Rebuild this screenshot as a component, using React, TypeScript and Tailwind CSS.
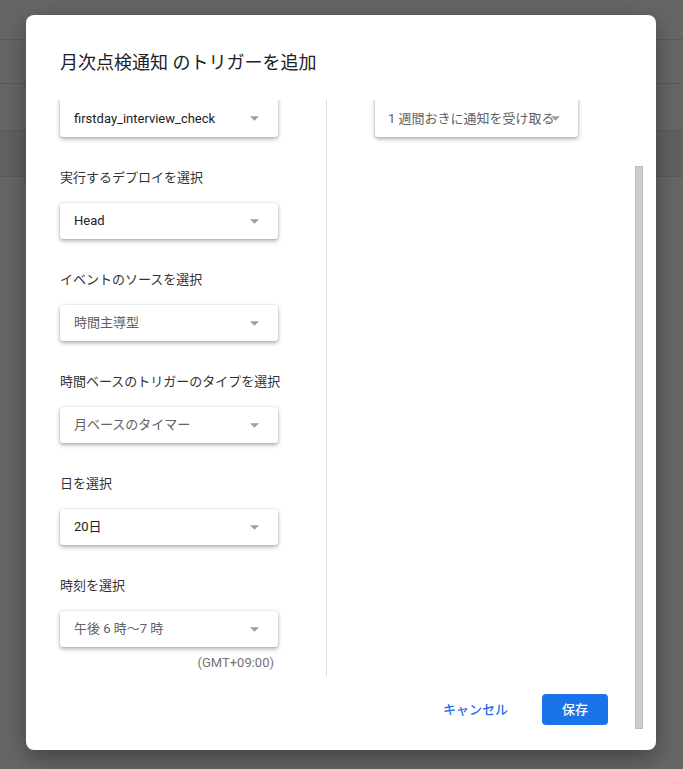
import React from "react";

const font = { fontFamily: '"Roboto", "Noto Sans CJK JP", sans-serif' };

function Arrow({ className }: { className: string }) {
  return (
    <svg viewBox="0 0 10 5" className={className}>
      <path d="M0 0 L10 0 L5 5 Z" fill="#9e9e9e" />
    </svg>
  );
}

// cut: the select is partly scrolled out of view at the top
function Select({ value, muted, wide, cut }: { value: string; muted?: boolean; wide?: boolean; cut?: boolean }) {
  return (
    <div
      className={
        "relative flex items-center rounded-[3px] bg-white shadow-[0_2px_4px_rgba(0,0,0,0.32),0_0_2px_rgba(0,0,0,0.14)] " +
        (cut ? "-mt-[4px] h-[41px] pt-[4px] " : "h-[36px] ") +
        (wide ? "w-[203px] pl-[13px]" : "w-[218px] pl-[14px]")
      }
    >
      <span className={"whitespace-nowrap text-[13px] " + (muted ? "text-[#616161]" : "text-[#212121]")}>{value}</span>
      <Arrow
        className={
          "absolute h-[5px] w-[9px] " + (cut ? "top-[20px] " : "top-[16px] ") + (wide ? "right-[18px]" : "right-[19px]")
        }
      />
    </div>
  );
}

function Field({ label, value, muted }: { label: string; value: string; muted?: boolean }) {
  return (
    <div className="mt-[31px]">
      <div className="mb-[15px] h-[20px] text-[13px] leading-[20px] text-[#333]">{label}</div>
      <Select value={value} muted={muted} />
    </div>
  );
}

export default function App() {
  return (
    <div style={font} className="relative h-[769px] w-[683px] overflow-hidden bg-[#666666]">
      {/* page behind the overlay */}
      <div className="h-[40px] border-b border-[#5a5a5a]" />
      <div className="h-[44px] border-b border-[#5a5a5a]" />
      <div className="h-[47px] border-b border-[#5a5a5a]" />
      <div className="h-[46px] border-b border-[#5a5a5a] bg-[#616161]" />

      {/* dialog */}
      <div className="absolute left-[26px] top-[15px] h-[735px] w-[630px] rounded-[8px] bg-white shadow-[0_8px_24px_rgba(0,0,0,0.35)]">
        <div className="pl-[34px] pt-[36px]">
          <h2 className="h-[24px] text-[18px] leading-[24px] text-[#202124]">月次点検通知 のトリガーを追加</h2>
        </div>

        <div className="mt-[25px] flex h-[576px] overflow-hidden">
          <div className="w-[301px] border-r border-[#dadce0] pl-[34px]">
            <Select value="firstday_interview_check" cut />
            <Field label="実行するデプロイを選択" value="Head" />
            <Field label="イベントのソースを選択" value="時間主導型" muted />
            <Field label="時間ベースのトリガーのタイプを選択" value="月ベースのタイマー" muted />
            <Field label="日を選択" value="20日" />
            <Field label="時刻を選択" value="午後 6 時〜7 時" muted />
            <div className="mt-[8px] w-[214px] text-right text-[13px] leading-[16px] text-[#757575]">(GMT+09:00)</div>
          </div>
          <div className="pl-[48px]">
            <Select value="1 週間おきに通知を受け取る" muted wide cut />
          </div>
        </div>

        <div className="mt-[18px] flex items-center justify-end pr-[48px]">
          <button className="mr-[20px] h-[31px] px-[14px] text-[13px] font-medium text-[#1a73e8]">キャンセル</button>
          <button className="h-[31px] w-[66px] rounded-[4px] bg-[#1a73e8] text-[13px] font-medium text-white">保存</button>
        </div>

        {/* scrollbar */}
        <div className="absolute left-[609px] top-[151px] h-[563px] w-[8px] border border-[#bdbdbd] bg-[#cdcdcd]" />
      </div>
    </div>
  );
}
